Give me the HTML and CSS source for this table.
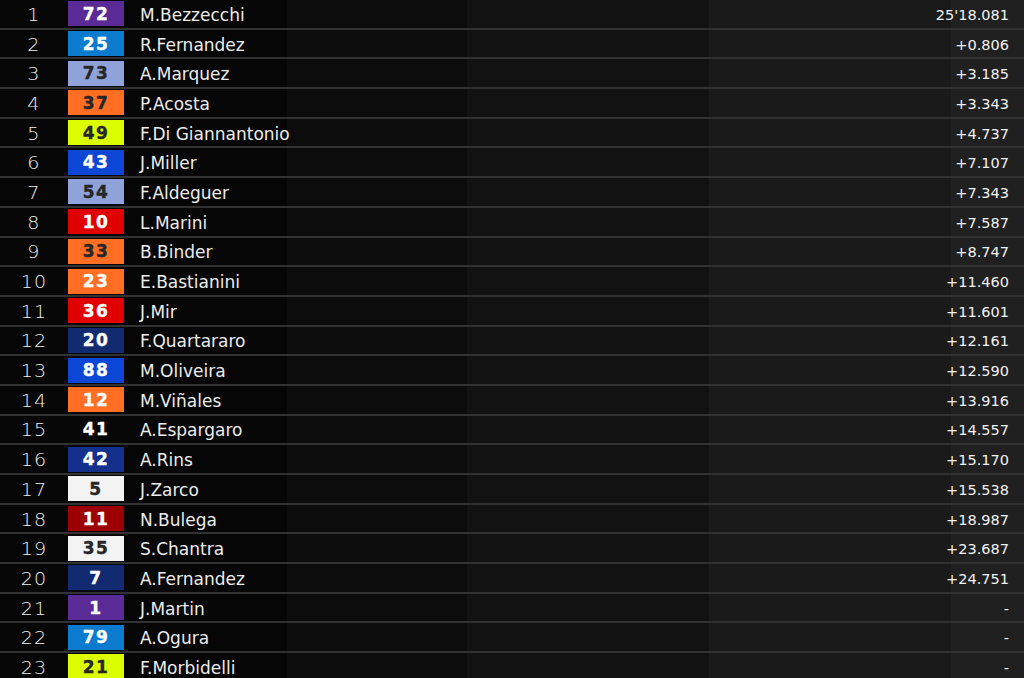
FILE: index.html
```html
<!DOCTYPE html>
<html lang="en">
<head>
<meta charset="utf-8">
<title>Race Results</title>
<link rel="stylesheet" href="styles.css">
</head>
<body>
<div class="results">
  <div class="row"><span class="pos">1</span><span class="num c-purple">72</span><span class="name">M.Bezzecchi</span><span class="time">25'18.081</span></div>
  <div class="row"><span class="pos">2</span><span class="num c-sky">25</span><span class="name">R.Fernandez</span><span class="time">+0.806</span></div>
  <div class="row"><span class="pos">3</span><span class="num c-lav dark">73</span><span class="name">A.Marquez</span><span class="time">+3.185</span></div>
  <div class="row"><span class="pos">4</span><span class="num c-orange dark">37</span><span class="name">P.Acosta</span><span class="time">+3.343</span></div>
  <div class="row"><span class="pos">5</span><span class="num c-lime dark">49</span><span class="name">F.Di Giannantonio</span><span class="time">+4.737</span></div>
  <div class="row"><span class="pos">6</span><span class="num c-blue">43</span><span class="name">J.Miller</span><span class="time">+7.107</span></div>
  <div class="row"><span class="pos">7</span><span class="num c-lav dark">54</span><span class="name">F.Aldeguer</span><span class="time">+7.343</span></div>
  <div class="row"><span class="pos">8</span><span class="num c-red">10</span><span class="name">L.Marini</span><span class="time">+7.587</span></div>
  <div class="row"><span class="pos">9</span><span class="num c-orange dark">33</span><span class="name">B.Binder</span><span class="time">+8.747</span></div>
  <div class="row"><span class="pos">10</span><span class="num c-orange">23</span><span class="name">E.Bastianini</span><span class="time">+11.460</span></div>
  <div class="row"><span class="pos">11</span><span class="num c-red">36</span><span class="name">J.Mir</span><span class="time">+11.601</span></div>
  <div class="row"><span class="pos">12</span><span class="num c-navy">20</span><span class="name">F.Quartararo</span><span class="time">+12.161</span></div>
  <div class="row"><span class="pos">13</span><span class="num c-blue">88</span><span class="name">M.Oliveira</span><span class="time">+12.590</span></div>
  <div class="row"><span class="pos">14</span><span class="num c-orange">12</span><span class="name">M.Viñales</span><span class="time">+13.916</span></div>
  <div class="row"><span class="pos">15</span><span class="num">41</span><span class="name">A.Espargaro</span><span class="time">+14.557</span></div>
  <div class="row"><span class="pos">16</span><span class="num c-navy2">42</span><span class="name">A.Rins</span><span class="time">+15.170</span></div>
  <div class="row"><span class="pos">17</span><span class="num c-white dark">5</span><span class="name">J.Zarco</span><span class="time">+15.538</span></div>
  <div class="row"><span class="pos">18</span><span class="num c-darkred">11</span><span class="name">N.Bulega</span><span class="time">+18.987</span></div>
  <div class="row"><span class="pos">19</span><span class="num c-white dark">35</span><span class="name">S.Chantra</span><span class="time">+23.687</span></div>
  <div class="row"><span class="pos">20</span><span class="num c-navy">7</span><span class="name">A.Fernandez</span><span class="time">+24.751</span></div>
  <div class="row"><span class="pos">21</span><span class="num c-purple">1</span><span class="name">J.Martin</span><span class="time">-</span></div>
  <div class="row"><span class="pos">22</span><span class="num c-sky">79</span><span class="name">A.Ogura</span><span class="time">-</span></div>
  <div class="row"><span class="pos">23</span><span class="num c-lime dark">21</span><span class="name">F.Morbidelli</span><span class="time">-</span></div>
</div>
</body>
</html>
```

FILE: styles.css
```css
html, body {
  margin: 0;
  padding: 0;
}
body {
  width: 1024px;
  height: 678px;
  overflow: hidden;
  background: linear-gradient(to right,
    #060606 0px, #060606 287px,
    #0c0c0c 287px, #0c0c0c 467px,
    #121212 467px, #121212 709px,
    #1a1a1a 709px, #1a1a1a 951px,
    #202020 951px, #202020 1024px);
  font-family: "DejaVu Sans", "Noto Sans", sans-serif;
  color: #ececec;
}
.results {
  display: flex;
  flex-direction: column;
}
.row {
  box-sizing: border-box;
  height: 29.7px;
  border-bottom: 2px solid #323232;
  display: grid;
  grid-template-columns: 68px 56px 1fr auto;
  align-items: center;
}
.pos {
  text-align: center;
  padding-top: 2px;
  font-family: "DejaVu Sans", sans-serif;
  font-weight: 200;
  font-size: 17px;
  letter-spacing: 1px;
  color: #f0f0f0;
  display: inline-block;
  transform: scaleX(1.12);
}
.num {
  height: 25px;
  display: flex;
  align-items: center;
  justify-content: center;
  font-family: "DejaVu Sans", sans-serif;
  font-weight: 700;
  font-size: 17px;
  letter-spacing: 1.5px;
  -webkit-text-stroke: 0.4px currentColor;
  color: #ffffff;
}
.num.dark { color: #262626; }
.c-purple { background: #5a2a96; }
.c-sky { background: #0b7bd0; }
.c-lav { background: #8fa2da; }
.c-orange { background: #ff6e22; }
.c-lime { background: #dcff00; }
.c-blue { background: #0c46d6; }
.c-red { background: #e10000; }
.c-navy { background: #122a70; }
.c-navy2 { background: #12308c; }
.c-white { background: #f3f3f3; }
.c-darkred { background: #9c0000; }
.name {
  padding-left: 16px;
  padding-top: 2px;
  font-size: 17px;
  color: #ececec;
}
.time {
  padding-right: 15px;
  padding-top: 2px;
  font-size: 14.5px;
  text-align: right;
  color: #f2f2f2;
}
```
